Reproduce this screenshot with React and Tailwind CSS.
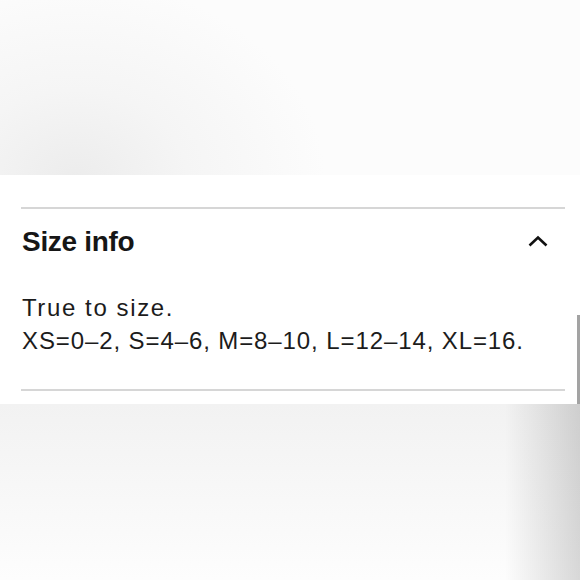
export default function App() {
    return (
        <div className="w-[580px] h-[580px] overflow-hidden relative bg-white" style={{ fontFamily: '"Liberation Sans", Arial, sans-serif' }}>
            {/* Top backdrop */}
            <div className="h-[175px] bg-[radial-gradient(ellipse_250px_200px_at_75px_180px,#ececec_0%,#f5f5f5_45%,#fcfcfc_100%)]" />

            {/* Accordion panel */}
            <div className="bg-white pl-[21px] pr-[15px] pt-[32px] pb-[13px]">
                <div className="border-t-2 border-[#d6d6d6]">
                    <div className="h-[66px] flex items-center justify-between">
                        <h2 className="text-[28px] font-bold text-[#161616] tracking-[-0.3px] pl-px">Size info</h2>
                        <svg width="20" height="12" viewBox="0 0 20 12" className="mr-[17px] mt-[-2px]" fill="none">
                            <polyline points="1.5,10.5 10,2.5 18.5,10.5" stroke="#111" strokeWidth="2.6" />
                        </svg>
                    </div>
                    <div className="pt-[16px] pb-[32px] text-[24px] leading-[33px] tracking-[0.9px] text-[#1c1c1c] pl-px">
                        <p className="tracking-[1.6px]">True to size.</p>
                        <p>XS=0–2, S=4–6, M=8–10, L=12–14, XL=16.</p>
                    </div>
                </div>
                <div className="border-t-2 border-[#d6d6d6]" />
            </div>

            {/* Bottom backdrop */}
            <div className="h-[176px] bg-[linear-gradient(to_right,transparent_87%,rgba(0,0,0,0.15)_100%),linear-gradient(to_bottom,#f2f2f2,#fdfdfd)]" />

            {/* scroll indicator */}
            <div className="absolute right-0 top-[315px] w-[3px] h-[89px] bg-[#a3a3a3]" />
        </div>
    );
}
